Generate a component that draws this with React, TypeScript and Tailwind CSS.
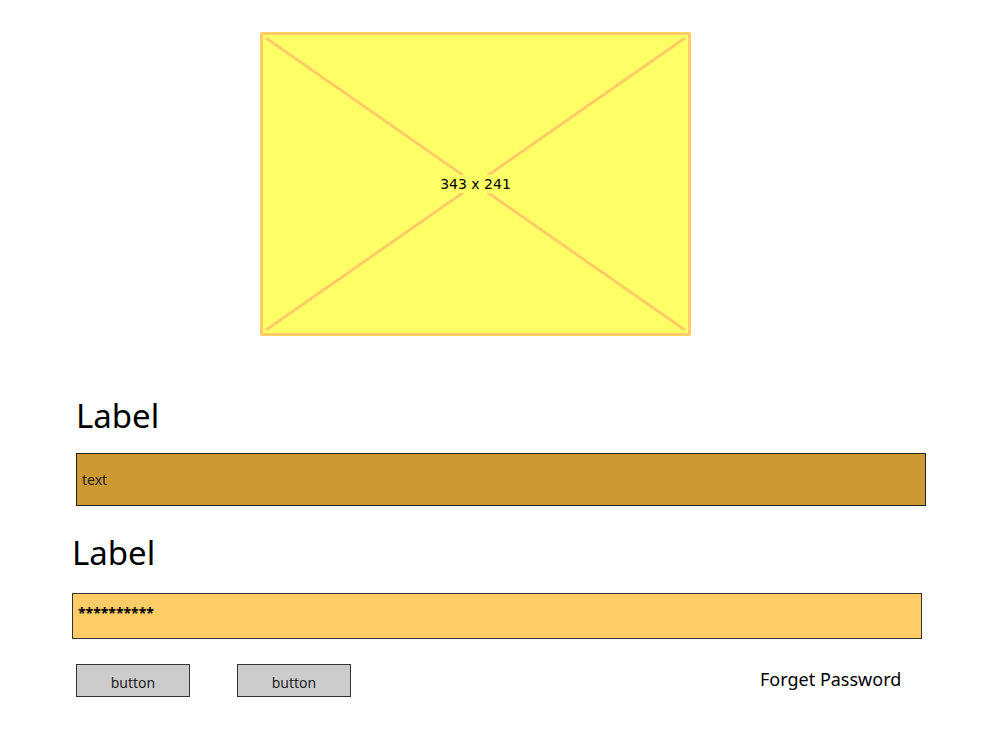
export default function App() {
  const hand = { fontFamily: '"Comic Sans MS", "Noto Sans", sans-serif' };
  return (
    <div className="w-[1000px] h-[750px] bg-white relative overflow-hidden" style={hand}>
      <div className="flex flex-col">
        <div className="ml-[260px] mt-[32px] w-[431px] h-[304px] relative bg-[#ffff66] border-[3px] border-[#ffcc66] rounded-[2px] flex items-center justify-center">
          <svg className="absolute inset-0" width="425" height="298" viewBox="0 0 425 298">
            <line x1="3" y1="3" x2="422" y2="295" stroke="#ffcc66" strokeWidth="3" />
            <line x1="422" y1="3" x2="3" y2="295" stroke="#ffcc66" strokeWidth="3" />
          </svg>
          <span
            className="relative text-[14px] text-black bg-[#ffff66] px-[2px] leading-[18px] -mt-[1px]"
            style={{ fontFamily: '"DejaVu Sans", "Noto Sans", sans-serif' }}
          >
            343 x 241
          </span>
        </div>

        <div className="ml-[76px] mt-[60px] h-[40px] leading-[40px] text-[33px] text-black">Label</div>

        <div className="ml-[76px] mt-[17px] w-[850px] h-[53px] bg-[#cc9933] border border-[#222] flex items-center pl-[5px] text-[14px] text-[#222]">
          text
        </div>

        <div className="ml-[72px] mt-[27px] h-[40px] leading-[40px] text-[33px] text-black">Label</div>

        <div className="ml-[72px] mt-[20px] w-[850px] h-[46px] bg-[#ffcc66] border border-[#333] flex items-start pt-[8px] pl-[5px] text-[14px] font-bold text-black">
          **********
        </div>

        <div className="mt-[25px] flex items-center">
          <div className="ml-[76px] w-[114px] h-[33px] bg-[#cccccc] border border-[#333] flex items-center justify-center text-[14px] text-[#222] pt-[3px]">
            button
          </div>
          <div className="ml-[47px] w-[114px] h-[33px] bg-[#cccccc] border border-[#333] flex items-center justify-center text-[14px] text-[#222] pt-[3px]">
            button
          </div>
          <div className="ml-[409px] text-[18px] text-black -mt-[3px]">Forget Password</div>
        </div>
      </div>
    </div>
  );
}
